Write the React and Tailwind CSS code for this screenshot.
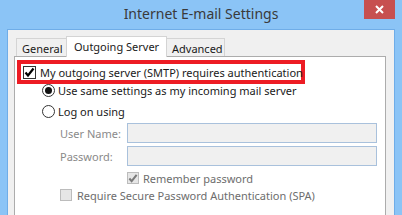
import React from "react";

const font = { fontFamily: '"Noto Sans", "Open Sans", sans-serif' };

function Check({ color = "#000" }) {
  return (
    <svg width="11" height="11" viewBox="0 0 11 11" className="block">
      <path d="M1.5 5.5 L4 8.5 L9.5 1.5" fill="none" stroke={color} strokeWidth="2.2" />
    </svg>
  );
}

function Radio({ checked }) {
  return (
    <div className="w-[13px] h-[13px] rounded-full border border-[#333] bg-white flex items-center justify-center shrink-0">
      {checked && <div className="w-[7px] h-[7px] rounded-full bg-[#111]" />}
    </div>
  );
}

export default function App() {
  return (
    <div
      className="w-[402px] h-[215px] bg-[#8bc4f6] relative overflow-hidden flex flex-col text-[11px] leading-none"
      style={font}
    >
      {/* title bar */}
      <div className="h-[29px] shrink-0 flex items-center justify-center text-[14px] text-[#3a3a3a] pb-[2px]">
        Internet E-mail Settings
      </div>
      <div className="absolute top-0 right-[7px] w-[31px] h-[19px] bg-[#c75050] flex items-center justify-center">
        <svg width="9" height="9" viewBox="0 0 9 9">
          <path d="M1 1 L8 8 M8 1 L1 8" stroke="#fff" strokeWidth="2" />
        </svg>
      </div>

      {/* window body */}
      <div className="mx-[7px] flex-1 border-x border-t border-[#6fade8] bg-[#f0f0f0] flex flex-col pl-[6px] pr-[8px]">
        {/* tabs */}
        <div className="h-[26px] shrink-0 flex items-end pl-[2px] relative z-10 whitespace-nowrap">
          <div className="w-[51px] h-[18px] border border-b-0 border-[#d4d4d4] bg-[#f0f0f0] text-[#1a1a1a] flex items-center pl-[5px] pt-[2px]">
            General
          </div>
          <div className="w-[101px] h-[21px] -ml-[1px] -mb-[1px] border border-b-0 border-[#d4d4d4] bg-white text-[#1a1a1a] flex items-start pl-[7px] pt-[4px]">
            Outgoing Server
          </div>
          <div className="w-[59px] h-[18px] -ml-[1px] border border-b-0 border-[#d4d4d4] bg-[#f0f0f0] text-[#1a1a1a] flex items-center pl-[5px] pt-[2px]">
            Advanced
          </div>
        </div>

        {/* pane */}
        <div className="flex-1 border-x border-t border-[#acacac] bg-white flex flex-col text-[#1a1a1a]">
          <div className="ml-[2px] mt-[3px] w-[288px] h-[24px] border-4 border-[#ed1c24] flex items-center pl-[2px]">
            <div className="w-[13px] h-[13px] border border-[#333] bg-white flex items-center justify-center shrink-0">
              <Check />
            </div>
            <span className="ml-[4px] whitespace-nowrap">My outgoing server (SMTP) requires authentication</span>
          </div>

          <div className="ml-[27px] mt-[-1px] h-[14px] flex items-center">
            <Radio checked />
            <span className="ml-[3px] whitespace-nowrap">Use same settings as my incoming mail server</span>
          </div>
          <div className="ml-[27px] mt-[8px] h-[13px] flex items-center">
            <Radio />
            <span className="ml-[3px] whitespace-nowrap">Log on using</span>
          </div>

          <div className="ml-[45px] mt-[5px] flex items-center">
            <span className="w-[67px] text-[#8a8a8a]">User Name:</span>
            <div className="w-[250px] h-[20px] border border-[#a9c1dc] bg-[#f0f0f0]" />
          </div>
          <div className="ml-[45px] mt-[3px] flex items-center">
            <span className="w-[67px] text-[#8a8a8a]">Password:</span>
            <div className="w-[250px] h-[20px] border border-[#a9c1dc] bg-[#f0f0f0]" />
          </div>

          <div className="ml-[112px] mt-[6px] flex items-center">
            <div className="w-[12px] h-[12px] border border-[#bcbcbc] bg-[#e6e6e6] flex items-center justify-center shrink-0">
              <Check color="#7a7a7a" />
            </div>
            <span className="ml-[4px] text-[#6d6d6d] whitespace-nowrap">Remember password</span>
          </div>

          <div className="ml-[45px] mt-[5px] flex items-center">
            <div className="w-[12px] h-[12px] border border-[#bcbcbc] bg-[#e6e6e6] shrink-0" />
            <span className="ml-[5px] text-[#6d6d6d] whitespace-nowrap">Require Secure Password Authentication (SPA)</span>
          </div>
        </div>
      </div>
    </div>
  );
}
